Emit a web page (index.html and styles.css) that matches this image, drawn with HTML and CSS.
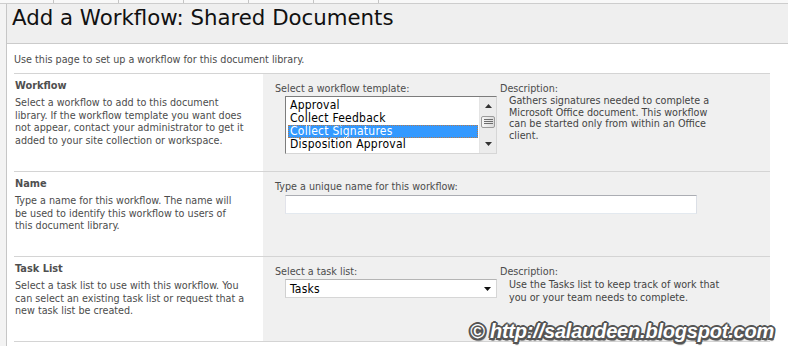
FILE: index.html
```html
<!DOCTYPE html>
<html>
<head>
<meta charset="utf-8">
<title>Add a Workflow: Shared Documents</title>
<link rel="stylesheet" href="styles.css">
</head>
<body>
<div class="topbar">
  <span class="tab first"></span><span class="tab"></span><span class="tab"></span><span class="tab"></span><span class="tab"></span><span class="tab"></span>
</div>
<div class="frame">
  <div class="rail"></div>
  <div class="main">
    <header class="titlebar"><h1>Add a Workflow: Shared Documents</h1></header>
    <div class="content">
      <p class="intro">Use this page to set up a workflow for this document library.</p>
      <div class="form">
        <section class="sect s1">
          <div class="info">
            <h2>Workflow</h2>
            <p>Select a workflow to add to this document<br>library. If the workflow template you want does<br>not appear, contact your administrator to get it<br>added to your site collection or workspace.</p>
          </div>
          <div class="fields">
            <div class="field">
              <div class="label">Select a workflow template:</div>
              <div class="listbox">
                <ul>
                  <li>Approval</li>
                  <li>Collect Feedback</li>
                  <li class="sel">Collect Signatures</li>
                  <li>Disposition Approval</li>
                </ul>
                <div class="vscroll">
                  <div class="sbtn"><svg width="7" height="4" viewBox="0 0 7 4"><path d="M3.5 0L7 4H0Z" fill="#333"/></svg></div>
                  <div class="thumb"><svg width="9" height="6" viewBox="0 0 9 6"><path d="M0 0.5H9M0 2.5H9M0 4.5H9" stroke="#6d6d6d" stroke-width="1"/></svg></div>
                  <div class="spacer"></div>
                  <div class="sbtn"><svg width="7" height="4" viewBox="0 0 7 4"><path d="M0 0H7L3.5 4Z" fill="#333"/></svg></div>
                </div>
              </div>
            </div>
            <div class="desc">
              <div class="label">Description:</div>
              <p class="dtext dense">Gathers signatures needed to complete a<br>Microsoft Office document. This workflow<br>can be started only from within an Office<br>client.</p>
            </div>
          </div>
        </section>
        <section class="sect s2">
          <div class="info">
            <h2>Name</h2>
            <p>Type a name for this workflow. The name will<br>be used to identify this workflow to users of<br>this document library.</p>
          </div>
          <div class="fields">
            <div class="field wide">
              <div class="label">Type a unique name for this workflow:</div>
              <div class="textbox"></div>
            </div>
          </div>
        </section>
        <section class="sect s3">
          <div class="info">
            <h2>Task List</h2>
            <p>Select a task list to use with this workflow. You<br>can select an existing task list or request that a<br>new task list be created.</p>
          </div>
          <div class="fields">
            <div class="field">
              <div class="label">Select a task list:</div>
              <div class="select"><span>Tasks</span><svg width="7" height="4" viewBox="0 0 7 4"><path d="M0 0H7L3.5 4Z" fill="#111"/></svg></div>
            </div>
            <div class="desc">
              <div class="label">Description:</div>
              <p class="dtext">Use the Tasks list to keep track of work that<br>you or your team needs to complete.</p>
            </div>
          </div>
        </section>
      </div>
    </div>
  </div>
</div>
<div class="watermark">© http://salaudeen.blogspot.com</div>
</body>
</html>
```

FILE: styles.css
```css
html, body {
  margin: 0;
  padding: 0;
}
body {
  width: 788px;
  height: 346px;
  overflow: hidden;
  position: relative;
  background: #fff;
  font-family: "DejaVu Sans Condensed", "DejaVu Sans", sans-serif;
  font-stretch: condensed;
  font-size: 10.7px;
  color: #4c4c4c;
}
.topbar {
  height: 3px;
  background: #f8f8f8;
  border-bottom: 1px solid #cdcdcd;
  display: flex;
}
.tab {
  flex: none;
  width: 64px;
  border-right: 1px solid #c4c4c4;
}
.tab.first {
  width: 53px;
}
.frame {
  display: flex;
  height: 342px;
}
.rail {
  flex: none;
  width: 6px;
  background: #f3f3f3;
  border-right: 1px solid #c6c6c6;
}
.main {
  flex: 1;
}
.titlebar {
  height: 39px;
  background: #efefef;
  border-bottom: 1px solid #cbcbcb;
  padding-left: 5px;
}
h1 {
  margin: 0;
  font-family: "DejaVu Sans", sans-serif;
  font-stretch: normal;
  font-weight: normal;
  font-size: 21.3px;
  line-height: 27px;
  color: #111;
}
.content {
  padding: 9px 0 0 7px;
}
.intro {
  margin: 0 0 7px;
  line-height: 13px;
}
.form {
  width: 756px;
  border-bottom: 1px solid #d4d4d4;
}
.sect {
  display: flex;
  border-top: 1px solid #d4d4d4;
}
.s1 { height: 97px; }
.s2, .s3 { height: 84px; }
.info {
  flex: none;
  width: 248px;
  padding: 5px 0 0 1px;
}
.info h2 {
  margin: 0 0 5px;
  font-size: 10.9px;
  line-height: 13px;
  font-weight: bold;
  color: #4f4f4f;
}
.info p {
  margin: 0;
  line-height: 12.5px;
}
.fields {
  flex: 1;
  display: flex;
  background: #f0f0f0;
  padding: 8px 0 0 12px;
}
.field {
  flex: none;
  width: 222px;
}
.field.wide {
  width: 422px;
}
.label {
  line-height: 13px;
}
.listbox {
  margin: 1px 0 0 10px;
  width: 212px;
  height: 58px;
  box-sizing: border-box;
  border: 1px solid;
  border-color: #7c7c7c #d6d6d6 #d6d6d6 #7c7c7c;
  background: #fff;
  display: flex;
}
.listbox ul {
  flex: 1;
  margin: 0;
  padding: 2px 1px 0 2px;
  list-style: none;
  font-size: 12px;
  letter-spacing: 0.25px;
  line-height: 13px;
  color: #000;
}
.listbox li {
  height: 13px;
  padding-left: 2px;
  white-space: nowrap;
}
.listbox li.sel {
  background: #3399ff;
  color: #fff;
  outline: 1px dotted #b07a50;
  outline-offset: -1px;
}
.vscroll {
  flex: none;
  width: 17px;
  background: #ececec;
  border-left: 1px solid #e4e4e4;
  box-sizing: border-box;
  display: flex;
  flex-direction: column;
  align-items: center;
  padding-bottom: 1px;
}
.sbtn {
  height: 17px;
  width: 100%;
  display: flex;
  align-items: center;
  justify-content: center;
}
.thumb {
  margin-top: 2px;
  width: 14px;
  height: 12px;
  box-sizing: border-box;
  border: 1px solid #9b9b9b;
  border-radius: 2px;
  background: linear-gradient(to right, #f6f6f6, #dcdcdc);
  display: flex;
  align-items: center;
  justify-content: center;
}
.spacer {
  flex: 1;
}
.textbox {
  margin: 2px 0 0 10px;
  width: 412px;
  height: 19px;
  box-sizing: border-box;
  border: 1px solid;
  border-color: #abadb3 #dbdfe6 #e3e9ef #e2e3ea;
  background: #fff;
}
.select {
  margin: 1px 0 0 10px;
  width: 212px;
  height: 19px;
  box-sizing: border-box;
  border: 1px solid;
  border-color: #b5b5b5 #d6d6d6 #d6d6d6 #d0d0d0;
  background: #fff;
  display: flex;
  align-items: center;
  justify-content: space-between;
  padding: 0 5px 0 4px;
  font-size: 12px;
  letter-spacing: 0.25px;
  color: #000;
}
.desc {
  flex: none;
  margin-left: 3px;
  width: 250px;
}
.dtext {
  margin: 0 0 0 9px;
  line-height: 13px;
  color: #444;
}
.dtext.dense {
  line-height: 11.7px;
}
.watermark {
  position: absolute;
  left: 470px;
  top: 320px;
  font-family: "Liberation Sans", Arial, sans-serif;
  font-style: italic;
  font-weight: bold;
  font-size: 20px;
  line-height: 23px;
  letter-spacing: -0.2px;
  color: #fff;
  white-space: nowrap;
  text-shadow:
    -1.5px -1.5px 0 #555, 1.5px -1.5px 0 #555, -1.5px 1.5px 0 #555, 1.5px 1.5px 0 #555,
    0 -2px 0 #555, 0 2px 0 #555, -2px 0 0 #555, 2px 0 0 #555,
    1px 2.5px 1px #888;
}
```
